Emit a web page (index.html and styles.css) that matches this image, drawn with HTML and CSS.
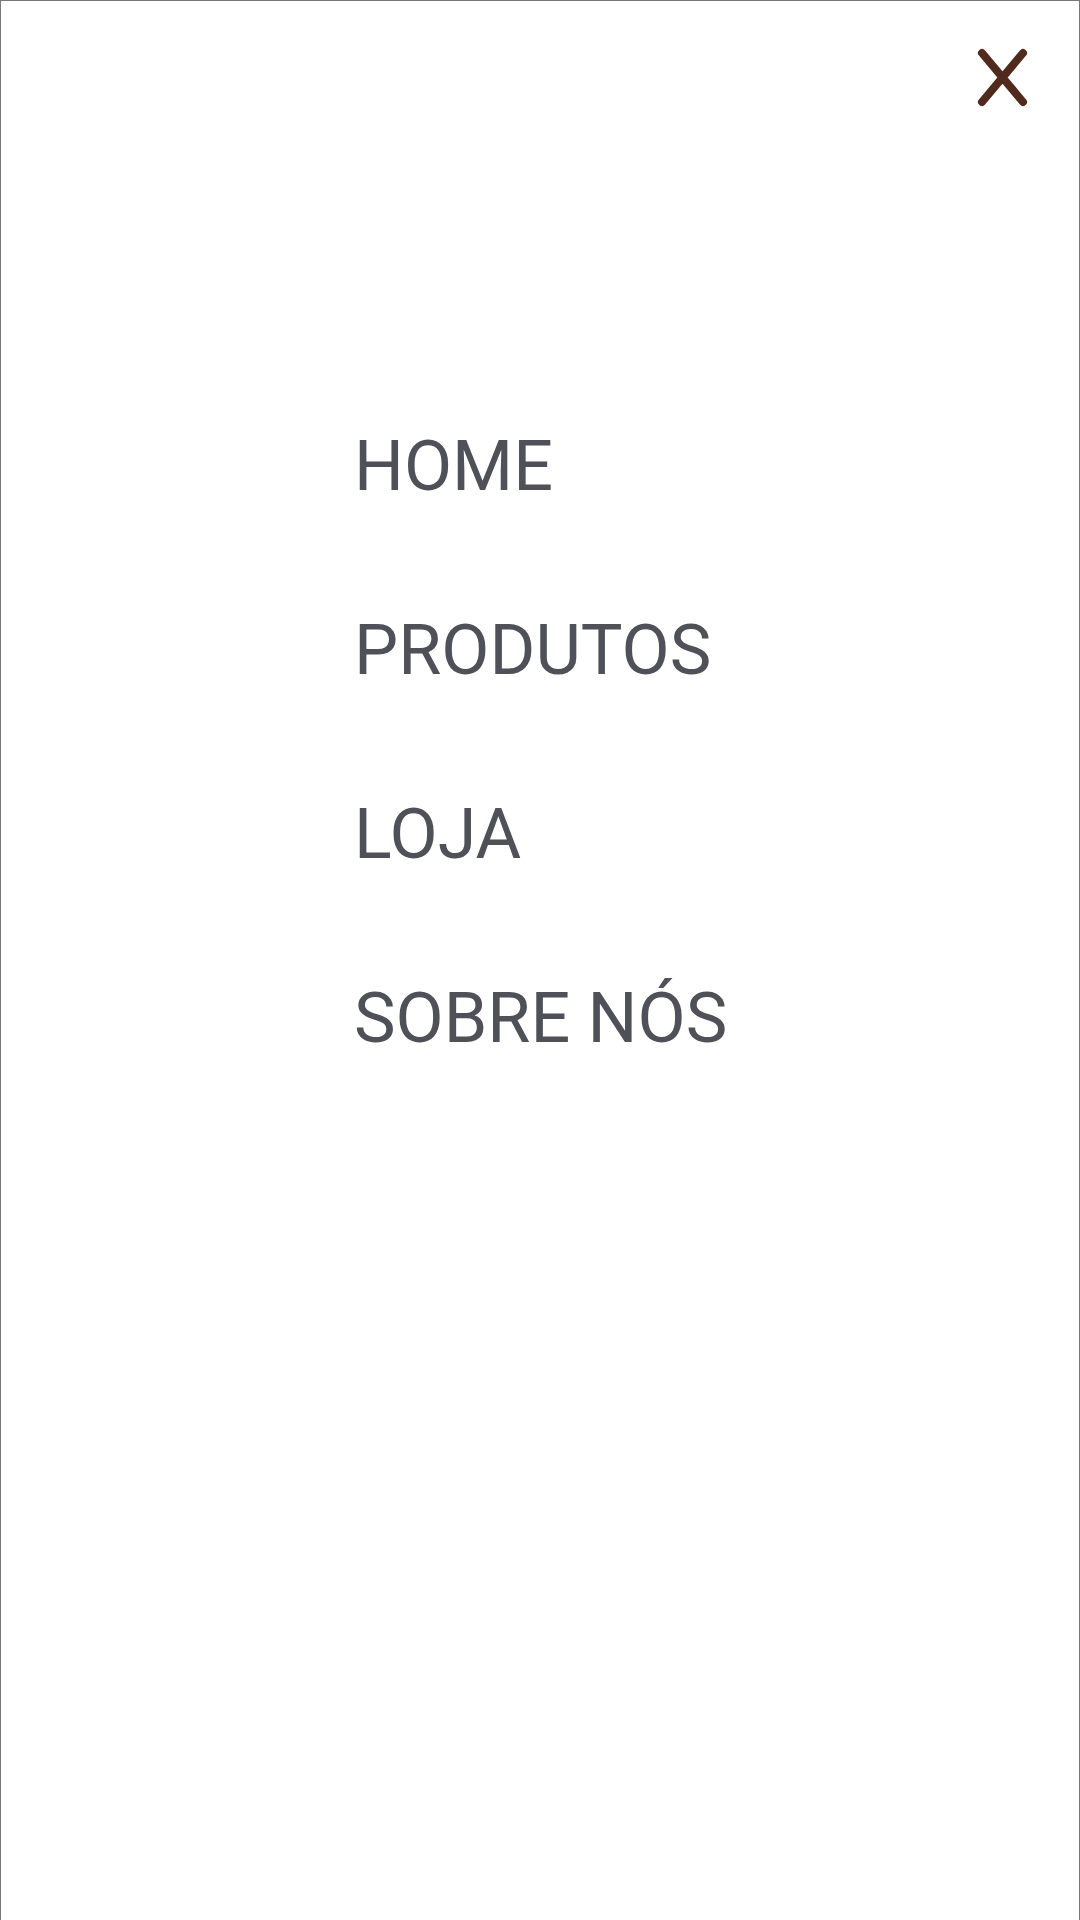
FILE: index.html
```html
<!DOCTYPE html>
<html lang="pt">
<head>
<meta charset="utf-8">
<title>Menu</title>
<link rel="stylesheet" href="styles.css">
</head>
<body>
<div class="menu">
  <header class="menu-header">
    <button class="close-btn" aria-label="Fechar">
      <svg width="60" height="68" viewBox="0 0 60 68">
        <path d="M10 10 L51 59 M51 10 L10 59" stroke="#4f2a1d" stroke-width="8" stroke-linecap="round" fill="none"/>
      </svg>
    </button>
  </header>
  <nav class="menu-nav">
    <a class="menu-link" href="#">HOME</a>
    <a class="menu-link" href="#">PRODUTOS</a>
    <a class="menu-link" href="#">LOJA</a>
    <a class="menu-link" href="#">SOBRE NÓS</a>
  </nav>
</div>
</body>
</html>
```
FILE: styles.css
```css
html, body {
  margin: 0;
  padding: 0;
  background: #fff;
}
.menu {
  box-sizing: border-box;
  width: 1080px;
  height: 1920px;
  border: 1px solid #777;
  border-bottom: none;
  background: #fff;
  font-family: Roboto, "Liberation Sans", sans-serif;
}
.menu-header {
  display: flex;
  justify-content: flex-end;
  padding: 42px 47px 0 0;
}
.close-btn {
  border: none;
  background: none;
  padding: 0;
  margin: 0;
  display: block;
  cursor: pointer;
}
.close-btn svg {
  display: block;
}
.menu-nav {
  display: flex;
  flex-direction: column;
  padding: 263px 0 0 353px;
}
.menu-link {
  font-size: 70px;
  line-height: 184px;
  color: #505058;
  text-decoration: none;
  white-space: nowrap;
}
```
